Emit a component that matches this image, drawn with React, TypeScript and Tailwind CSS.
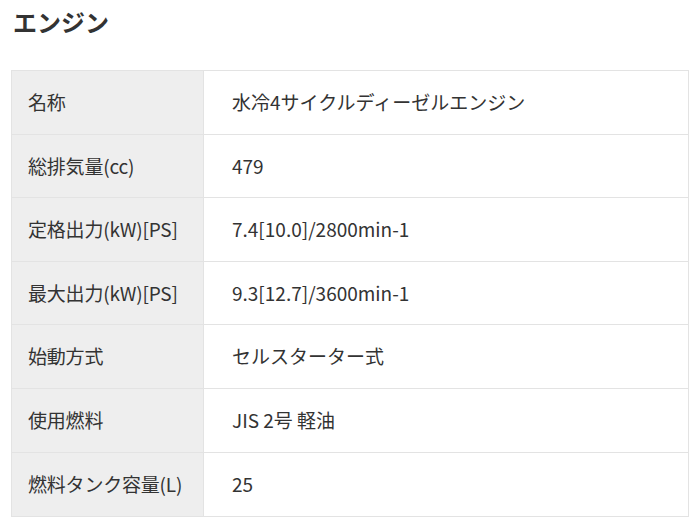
import React from "react";

const rows: [string, string][] = [
  ["名称", "水冷4サイクルディーゼルエンジン"],
  ["総排気量(cc)", "479"],
  ["定格出力(kW)[PS]", "7.4[10.0]/2800min-1"],
  ["最大出力(kW)[PS]", "9.3[12.7]/3600min-1"],
  ["始動方式", "セルスターター式"],
  ["使用燃料", "JIS 2号 軽油"],
  ["燃料タンク容量(L)", "25"],
];

export default function App() {
  return (
    <div
      className="w-[700px] h-[531px] bg-white text-[#333333] overflow-hidden"
      style={{ fontFamily: '"Noto Sans CJK JP", "Noto Sans", sans-serif' }}
    >
      <h1 className="pl-[13px] pt-[6px] h-[70px] text-[24px] font-bold leading-[32px]">エンジン</h1>
      <div className="ml-[11px] w-[678px] border border-[#e3e3e3]">
        {rows.map(([k, v], i) => (
          <div
            key={i}
            className={`flex h-[63.6px] ${i < rows.length - 1 ? "border-b border-[#e3e3e3]" : ""}`}
          >
            <div className="w-[192px] shrink-0 bg-[#eeeeee] border-r border-[#e3e3e3] pl-[16px] flex items-center text-[19px] tracking-[-0.2px]">
              {k}
            </div>
            <div className="flex-1 pl-[28px] flex items-center text-[19px]">{v}</div>
          </div>
        ))}
      </div>
    </div>
  );
}
